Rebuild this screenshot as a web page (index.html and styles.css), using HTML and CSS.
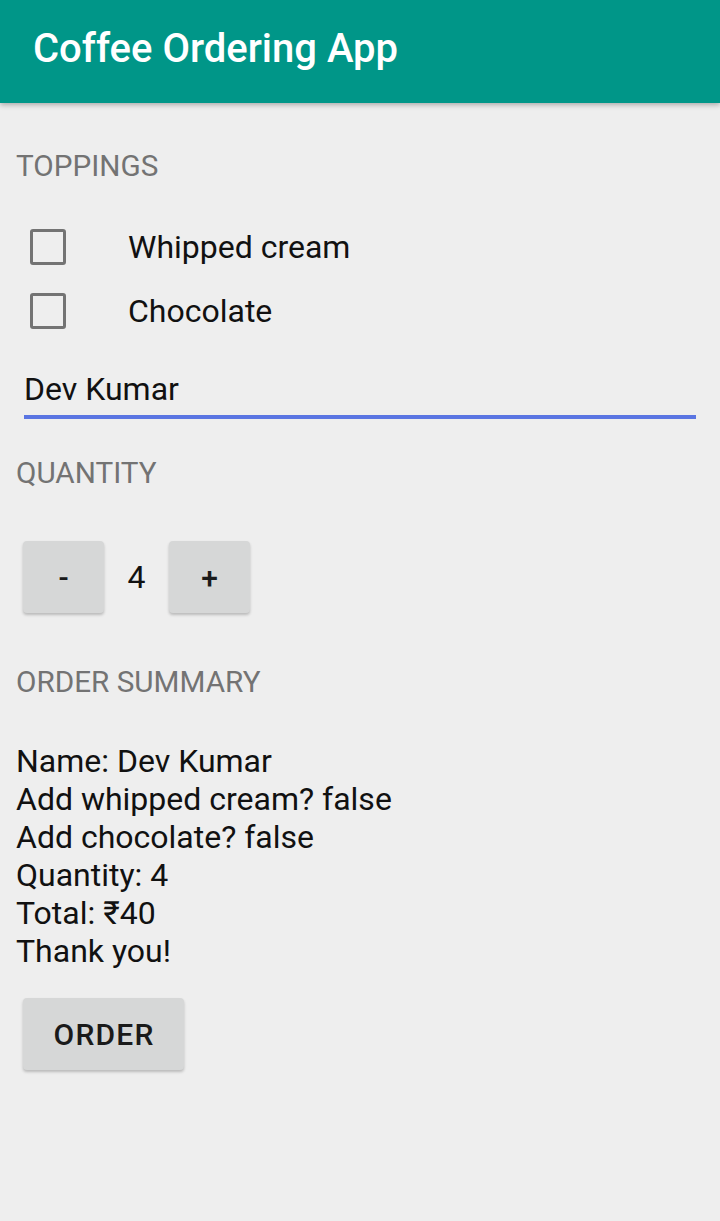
FILE: index.html
```html
<!DOCTYPE html>
<html>
<head>
<meta charset="utf-8">
<title>Coffee Ordering App</title>
<link rel="stylesheet" href="styles.css">
</head>
<body>
<header class="appbar">
  <h1 class="title">Coffee Ordering App</h1>
</header>
<main class="content">
  <div class="label label-toppings">TOPPINGS</div>
  <div class="checks">
    <div class="check-row">
      <span class="box"></span>
      <span class="check-text">Whipped cream</span>
    </div>
    <div class="check-row">
      <span class="box"></span>
      <span class="check-text">Chocolate</span>
    </div>
  </div>
  <div class="edit">
    <div class="edit-text">Dev Kumar</div>
    <div class="edit-line"></div>
  </div>
  <div class="label label-quantity">QUANTITY</div>
  <div class="qty-row">
    <div class="btn btn-small">-</div>
    <div class="qty">4</div>
    <div class="btn btn-small">+</div>
  </div>
  <div class="label label-summary">ORDER SUMMARY</div>
  <div class="summary">
    <div>Name: Dev Kumar</div>
    <div>Add whipped cream? false</div>
    <div>Add chocolate? false</div>
    <div>Quantity: 4</div>
    <div>Total: ₹40</div>
    <div>Thank you!</div>
  </div>
  <div class="btn btn-order"><span class="btn-label">ORDER</span></div>
</main>
</body>
</html>
```
FILE: styles.css
```css
html, body {
  margin: 0;
  padding: 0;
}
body {
  background: #eeeeee;
  font-family: Roboto, "Noto Sans", "DejaVu Sans", sans-serif;
  color: #111111;
  width: 720px;
  height: 1221px;
  overflow: hidden;
}
.appbar {
  position: relative;
  z-index: 1;
  height: 103px;
  box-sizing: border-box;
  padding: 29px 0 0 33px;
  background: #009688;
  box-shadow: 0 2px 5px rgba(0, 0, 0, 0.28);
}
.title {
  margin: 0;
  font-size: 40px;
  line-height: 40px;
  font-weight: 500;
  color: #ffffff;
}
.content {
  padding: 0 16px;
  display: flex;
  flex-direction: column;
}
.label {
  font-size: 29.7px;
  line-height: 28px;
  color: #737373;
}
.label-toppings { margin-top: 49px; }
.label-quantity { margin-top: 40px; }
.label-summary { margin-top: 55px; }
.checks {
  margin-top: 35px;
  display: flex;
  flex-direction: column;
}
.check-row {
  height: 64px;
  display: flex;
  align-items: center;
}
.box {
  box-sizing: border-box;
  width: 36px;
  height: 36px;
  margin-left: 14px;
  border: 3.5px solid #737373;
  border-radius: 3px;
}
.check-text {
  margin-left: 62px;
  font-size: 32px;
  line-height: 38px;
}
.edit {
  margin: 26px 8px 0 8px;
}
.edit-text {
  font-size: 32px;
  line-height: 40px;
}
.edit-line {
  margin-top: 6px;
  height: 4px;
  background: #5a75e2;
}
.qty-row {
  margin-top: 54px;
  margin-left: 7px;
  display: flex;
  align-items: center;
}
.btn {
  box-sizing: border-box;
  height: 72px;
  background: #d6d7d7;
  border-radius: 4px;
  box-shadow: 0 2px 3px rgba(0, 0, 0, 0.22);
  display: flex;
  align-items: center;
  justify-content: center;
  font-size: 30px;
  font-weight: 500;
  color: #1a1a1a;
}
.btn-small {
  width: 81px;
}
.qty {
  width: 65px;
  text-align: center;
  font-size: 32px;
  line-height: 38px;
}
.summary {
  margin-top: 46px;
  font-size: 32px;
  line-height: 38px;
}
.btn-order {
  margin-top: 28px;
  margin-left: 7px;
  width: 161px;
}
.btn-label {
  letter-spacing: 1.2px;
  margin-right: -1.2px;
}
```
